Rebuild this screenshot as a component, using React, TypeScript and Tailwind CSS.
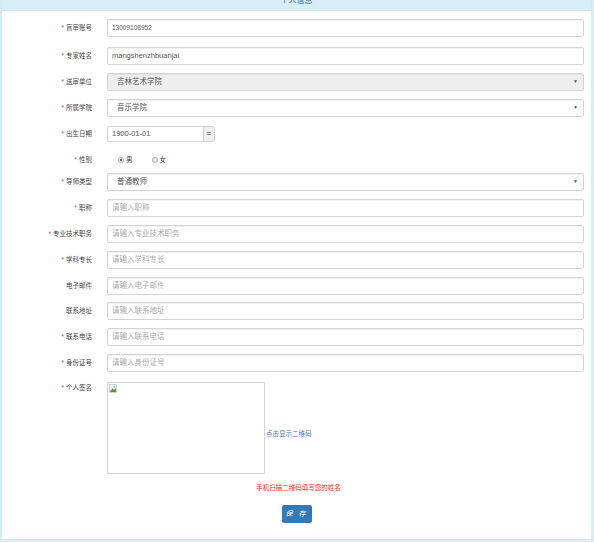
import React from 'react';

const font = { fontFamily: '"Liberation Sans", "Noto Sans CJK SC", sans-serif' };

const Label = ({ text, required, lh }: { text: string; required?: boolean; lh?: string }) => (
  <div className={`w-[90px] shrink-0 text-right text-[6.5px] text-[#444] ${lh ?? 'leading-[18px]'}`}>
    {required && <span className="mr-[2px] text-[#e33]">*</span>}
    {text}
  </div>
);

const Row = ({ label, required, children, className, lh }: { label: string; required?: boolean; children: React.ReactNode; className?: string; lh?: string }) => (
  <div className={`flex items-start ${className ?? 'mb-[8px]'}`}>
    <Label text={label} required={required} lh={lh} />
    <div className="ml-[15px] mr-[7px] flex-1">{children}</div>
  </div>
);

const Input = ({ value, placeholder, small }: { value?: string; placeholder?: string; small?: boolean }) => (
  <div className="flex h-[18px] items-center rounded-[2px] border border-[#d4d4d4] bg-white px-[4px] shadow-[inset_0_1px_1px_rgba(0,0,0,0.06)]">
    {value ? (
      <span className={`${small ? 'text-[6.5px]' : 'text-[7.5px]'} text-[#555]`}>{value}</span>
    ) : (
      <span className="text-[7.5px] text-[#aaa]">{placeholder}</span>
    )}
  </div>
);

const Select = ({ value, disabled }: { value: string; disabled?: boolean }) => (
  <div className={`flex h-[18px] items-center justify-between rounded-[2px] border border-[#d4d4d4] pl-[9px] pr-[5px] shadow-[inset_0_1px_1px_rgba(0,0,0,0.06)] ${disabled ? 'bg-[#eee]' : 'bg-white'}`}>
    <span className="text-[7.5px] text-[#555]">{value}</span>
    <span className="text-[5px] text-[#555]">▼</span>
  </div>
);

const Radio = ({ checked, text }: { checked?: boolean; text: string }) => (
  <div className="flex items-center gap-[2px]">
    <span className="flex h-[6px] w-[6px] items-center justify-center rounded-full border border-[#aaa] bg-[#f2f2f2]">
      {checked && <span className="h-[2.5px] w-[2.5px] rounded-full bg-[#444]" />}
    </span>
    <span className="text-[6.5px] text-[#333]">{text}</span>
  </div>
);

export default function App() {
  return (
    <div className="min-h-[542px] w-[594px] bg-[#e6eaec]" style={font}>
      <div className="mr-[1px] border-x-[2px] border-b border-[#d2ecf4] bg-white">
        <div className="h-[11px] overflow-hidden border-b border-[#c9e6ef] bg-[#d9edf7] text-center">
          <div className="-mt-[5px] text-[8px] leading-[12px] text-[#31708f]">个人信息</div>
        </div>

        <div className="pt-[8px]">
          <Row label="盲审账号" required className="mb-[10px]">
            <Input value="13009108952" small />
          </Row>
          <Row label="专家姓名" required>
            <Input value="mangshenzhbuanjai" />
          </Row>
          <Row label="送审单位" required>
            <Select value="吉林艺术学院" disabled />
          </Row>
          <Row label="所属学院" required className="mb-[9px]">
            <Select value="音乐学院" />
          </Row>
          <Row label="出生日期" required className="mb-0" lh="leading-[16px]">
            <div className="flex h-[16px] w-[108px] rounded-[2px] border border-[#d4d4d4] bg-white">
              <div className="flex flex-1 items-center px-[4px] text-[7.5px] text-[#555]">1900-01-01</div>
              <div className="flex w-[11px] items-center justify-center border-l border-[#d4d4d4] bg-[#f0f0f0] text-[5px] text-[#777]">
                ≑
              </div>
            </div>
          </Row>
          <Row label="性别" required className="mb-[6px] mt-[11px]" lh="leading-[14px]">
            <div className="flex h-[14px] items-center gap-[19px] pl-[11px]">
              <Radio checked text="男" />
              <Radio text="女" />
            </div>
          </Row>
          <Row label="导师类型" required>
            <Select value="普通教师" />
          </Row>
          <Row label="职称" required>
            <Input placeholder="请输入职称" />
          </Row>
          <Row label="专业技术职务" required>
            <Input placeholder="请输入专业技术职务" />
          </Row>
          <Row label="学科专长" required>
            <Input placeholder="请输入学科专长" />
          </Row>
          <Row label="电子邮件" className="mb-[7px]">
            <Input placeholder="请输入电子邮件" />
          </Row>
          <Row label="联系地址">
            <Input placeholder="请输入联系地址" />
          </Row>
          <Row label="联系电话" required>
            <Input placeholder="请输入联系电话" />
          </Row>
          <Row label="身份证号" required className="mb-[10px]">
            <Input placeholder="请输入身份证号" />
          </Row>

          <Row label="个人签名" required className="mb-0" lh="leading-[12px]">
            <div className="flex items-center">
              <div className="h-[92px] w-[158px] shrink-0 rounded-[1px] border border-[#d4d4d4] bg-white p-[1px]">
                <svg width="8" height="9" viewBox="0 0 8 9">
                  <rect x="0.5" y="0.5" width="7" height="8" fill="#f6f6f6" stroke="#bbb" strokeWidth="0.6" />
                  <path d="M1 7.5 L3.5 4.5 L5 6 L7 4 L7 8 L1 8 Z" fill="#4a9a3c" />
                  <circle cx="5.5" cy="2.5" r="1" fill="#7ab0d8" />
                </svg>
              </div>
              <span className="ml-[1px] mt-[12px] text-[6.5px] text-[#4a7bb5]">点击显示二维码</span>
            </div>
          </Row>

          <div className="mt-[9px] pl-[4px] text-center text-[6.5px] text-[#f22]">手机扫描二维码填写您的姓名</div>

          <div className="flex justify-center pb-[16px] pt-[12px]">
            <button className="h-[18px] w-[30px] rounded-[2px] bg-[#337ab7] text-[7px] italic tracking-[2px] text-white">保 存</button>
          </div>
        </div>
      </div>
    </div>
  );
}
